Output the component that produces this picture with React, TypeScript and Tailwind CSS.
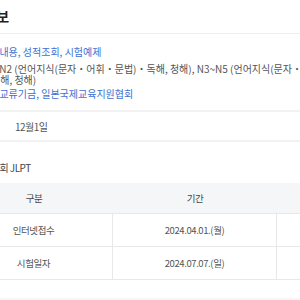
const info = [
  { lines: ["시험내용, 성적조회, 시험예제"], link: true, gap: "" },
  {
    lines: [
      "N1~N2 (언어지식(문자・어휘・문법)・독해, 청해), N3~N5 (언어지식(문자・어휘),",
      "・독해, 청해)",
    ],
    link: false,
    gap: "mt-[6px]",
  },
  { lines: ["국제교류기금, 일본국제교육지원협회"], link: true, gap: "mt-[3px]" },
];

const schedule = [
  { name: "인터넷접수", date: "2024.04.01.(월)" },
  { name: "시험일자", date: "2024.07.07.(일)" },
];

export default function App() {
  return (
    <div className="w-[300px] h-[300px] overflow-hidden bg-white">
      <div className="ml-[-45px] w-[700px] font-['Noto_Sans_CJK_KR','Noto_Sans',sans-serif] text-[10px] text-[#555]">
        {/* Title */}
        <div className="h-[34px] pl-[4px] flex items-center border-b border-[#eeeeee]">
          <h2 className="text-[14px] font-bold tracking-[-0.5px] text-[#222]">시험정보</h2>
        </div>

        {/* Info list */}
        <div className="pt-[12px] pb-[11px] flex flex-col border-b-2 border-[#f2f2f2]">
          {info.map((row, i) => (
            <div key={i} className={`flex leading-[11px] ${row.gap}`}>
              <div className="w-[26px] shrink-0" />
              <div className={row.link ? "text-[#3d6fd3] whitespace-nowrap" : "whitespace-nowrap"}>
                {row.lines.map((l, j) => (
                  <div key={j}>{l}</div>
                ))}
              </div>
            </div>
          ))}
        </div>

        {/* Date */}
        <div className="h-[30px] flex items-center tracking-[-0.5px] border-b-2 border-[#f2f2f2]">
          <div className="w-[60px] shrink-0" />
          <span className="whitespace-nowrap">12월1일</span>
        </div>

        {/* Caption */}
        <div className="h-[41px] flex items-center pt-[9px] tracking-[-0.5px] text-[#444]">2024년 제1회 JLPT</div>

        {/* Table */}
        <div className="w-[640px] text-[9.5px] tracking-[-0.4px]">
          <div className="grid grid-cols-[158px_164px_160px_158px] h-[31px] items-center bg-[#f5f6f8] text-[#444] border-b border-[#e8e8e8]">
            <div className="text-center">구분</div>
            <div className="text-center">기간</div>
            <div className="text-center">발표</div>
            <div className="text-center">비고</div>
          </div>
          {schedule.map((r) => (
            <div
              key={r.name}
              className="grid grid-cols-[158px_164px_160px_158px] h-[33px] border-b border-[#e8e8e8]"
            >
              <div className="flex items-center justify-center border-r border-[#e8e8e8]">{r.name}</div>
              <div className="flex items-center justify-center border-r border-[#e8e8e8]">{r.date}</div>
              <div className="flex items-center justify-center border-r border-[#e8e8e8]" />
              <div />
            </div>
          ))}
        </div>

        {/* Next section */}
        <div className="mt-[18px] h-[30px] bg-[#f5f6f8]" />
      </div>
    </div>
  );
}
